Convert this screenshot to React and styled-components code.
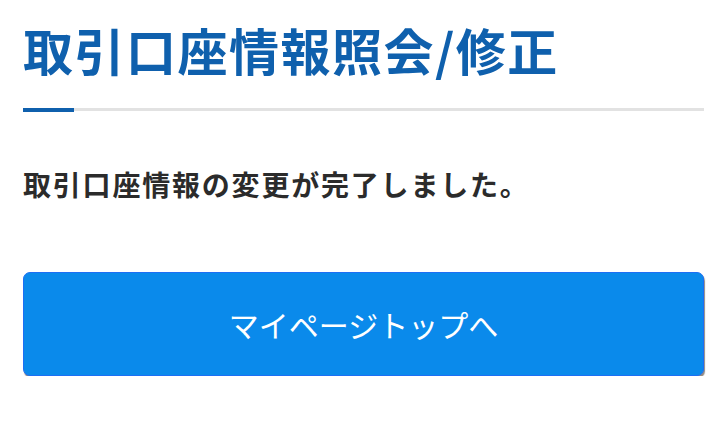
import React from "react";
import styled, { createGlobalStyle } from "styled-components";

const GlobalStyle = createGlobalStyle`
  html, body { margin: 0; padding: 0; background: #fff; }
  body { font-family: "Noto Sans CJK JP", "Noto Sans", sans-serif; }
`;

const Page = styled.main`
  padding: 18px 22px 0 23px;
  display: flex;
  flex-direction: column;
`;

const Title = styled.h1`
  margin: 0;
  font-size: 50px;
  font-weight: 700;
  line-height: 62px;
  letter-spacing: 1.5px;
  color: #0f60ad;
  padding-bottom: 28px;
  border-bottom: 3px solid #e2e2e2;
  position: relative;
  &::after {
    content: "";
    position: absolute;
    left: 0;
    bottom: -4px;
    width: 51px;
    height: 4px;
    background: #0f60ad;
  }
`;

const Message = styled.p`
  margin: 53px 0 0;
  font-size: 28px;
  font-weight: 700;
  line-height: 40px;
  letter-spacing: 1.8px;
  color: #2b2b2b;
`;

const PrimaryButton = styled.button`
  margin-top: 68px;
  height: 104px;
  width: 100%;
  border: 1px solid #1d6ff4;
  border-radius: 7px;
  background: #0a8aeb;
  box-shadow: 1px 2px 1px 0 #8f8a86;
  color: #fff;
  font-family: "Noto Sans CJK JP", "Noto Sans", sans-serif;
  font-size: 30px;
  font-weight: 400;
  letter-spacing: 0;
  cursor: pointer;
`;

export default function App() {
  return (
    <>
      <GlobalStyle />
      <Page>
        <Title>取引口座情報照会/修正</Title>
        <Message>取引口座情報の変更が完了しました。</Message>
        <PrimaryButton type="button">マイページトップへ</PrimaryButton>
      </Page>
    </>
  );
}
